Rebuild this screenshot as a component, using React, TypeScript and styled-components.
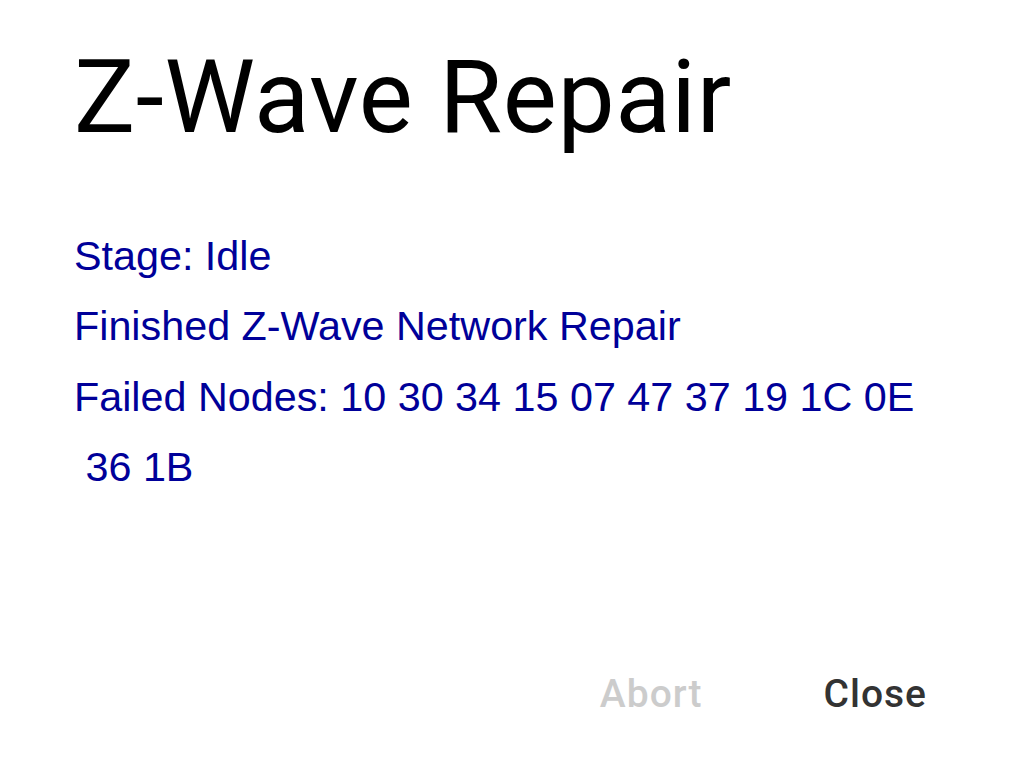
import styled, { createGlobalStyle } from "styled-components";

const GlobalStyle = createGlobalStyle`
  html, body {
    margin: 0;
    padding: 0;
    background: #ffffff;
  }
`;

const Dialog = styled.div`
  display: flex;
  flex-direction: column;
  min-height: 768px;
  box-sizing: border-box;
  padding: 37px 97px 50px 74px;
  background: #ffffff;
`;

const Title = styled.h1`
  margin: 0;
  font-family: Roboto, "Noto Sans", sans-serif;
  font-weight: 400;
  font-size: 102px;
  line-height: 120px;
  letter-spacing: 0.6px;
  color: #000000;
`;

const Body = styled.div`
  margin-top: 64px;
  display: flex;
  flex-direction: column;
`;

const Line = styled.div`
  font-family: "Liberation Sans", Arial, sans-serif;
  font-size: 41.3px;
  line-height: 70.3px;
  color: #000099;
  white-space: pre;
`;

const Actions = styled.div`
  margin-top: auto;
  display: flex;
  justify-content: flex-end;
  align-items: center;
  gap: 121px;
`;

const ActionButton = styled.button<{ $disabled?: boolean }>`
  border: none;
  background: none;
  padding: 0;
  font-family: Roboto, "Noto Sans", sans-serif;
  font-weight: 500;
  font-size: 39px;
  line-height: 48px;
  letter-spacing: 1px;
  color: ${(p) => (p.$disabled ? "#cccccc" : "#333333")};
  cursor: ${(p) => (p.$disabled ? "default" : "pointer")};
`;

const failedNodes = ["10", "30", "34", "15", "07", "47", "37", "19", "1C", "0E"];

export default function App() {
  return (
    <>
      <GlobalStyle />
      <Dialog>
        <Title>Z-Wave Repair</Title>
        <Body>
          <Line>Stage: Idle</Line>
          <Line>Finished Z-Wave Network Repair</Line>
          <Line>Failed Nodes: {failedNodes.join(" ")}</Line>
          <Line> 36 1B</Line>
        </Body>
        <Actions>
          <ActionButton $disabled>Abort</ActionButton>
          <ActionButton>Close</ActionButton>
        </Actions>
      </Dialog>
    </>
  );
}
